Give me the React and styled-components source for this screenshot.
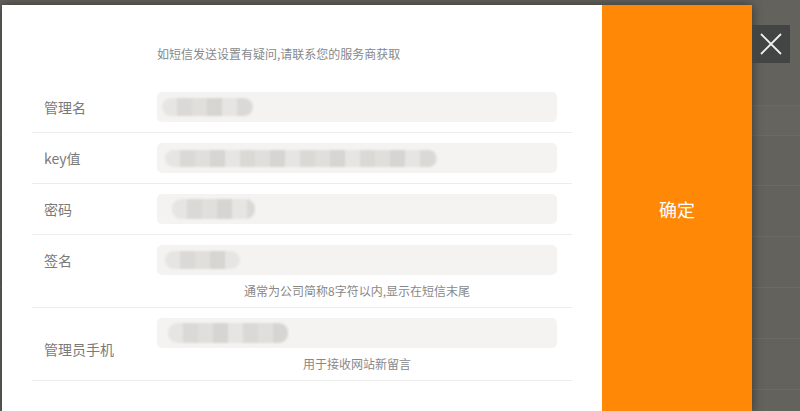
import React from "react";
import styled, { createGlobalStyle } from "styled-components";

const GlobalStyle = createGlobalStyle`
  * { box-sizing: border-box; }
  html, body { margin: 0; padding: 0; }
  body {
    width: 800px;
    height: 411px;
    overflow: hidden;
    background: #63625c;
    font-family: "Noto Sans CJK SC", "Noto Sans", "Liberation Sans", sans-serif;
  }
`;

const Page = styled.div`
  position: relative;
  width: 800px;
  height: 411px;
  overflow: hidden;
  background: #63625c;
`;

const Backdrop = styled.div`
  display: flex;
  flex-direction: column;
  padding-top: 105px;
`;

const BgRow = styled.div`
  height: ${(p) => p.$h}px;
  border-top: 1px solid #6b6a64;
  background: ${(p) => (p.$band ? "#65645e" : "transparent")};
`;

const Modal = styled.div`
  position: absolute;
  left: 2px;
  top: 5px;
  width: 750px;
  height: 408px;
  display: flex;
  box-shadow: 0 0 10px rgba(0, 0, 0, 0.45);
`;

const FormPanel = styled.div`
  width: 600px;
  background: #fff;
  padding: 0 30px;
  display: flex;
  flex-direction: column;
`;

const TopHint = styled.div`
  padding: 40px 0 19px 125px;
  font-size: 12px;
  line-height: 18px;
  color: #888;
`;

const Row = styled.div`
  display: flex;
  align-items: ${(p) => (p.$center ? "center" : "flex-start")};
  padding: 10px 15px 0 0;
  border-bottom: 1px solid #ececec;
  min-height: 51px;
`;

const Label = styled.div`
  width: 125px;
  flex: none;
  padding-left: 12px;
  font-size: 14px;
  line-height: 30px;
  color: #7a7a7a;
`;

const Field = styled.div`
  width: 400px;
  display: flex;
  flex-direction: column;
  padding-bottom: ${(p) => (p.$hint ? 0 : 10)}px;
`;

const Input = styled.div`
  height: 30px;
  border-radius: 5px;
  background: #f4f3f1;
  display: flex;
  align-items: center;
  padding-left: ${(p) => p.$pad}px;
`;

const Mask = styled.span`
  display: block;
  width: ${(p) => p.$w}px;
  height: ${(p) => p.$h || 16}px;
  border-radius: 9px;
  background: repeating-linear-gradient(
    90deg,
    #e6e5e3 0 15px,
    #dad9d6 15px 30px,
    #e0dfdc 30px 45px,
    #d6d5d2 45px 60px
  );
  filter: blur(0.9px);
`;

const FieldHint = styled.div`
  text-align: center;
  font-size: 12px;
  line-height: 18px;
  color: #888;
  padding: 7px 0 7px;
`;

const ConfirmPanel = styled.button`
  width: 150px;
  border: none;
  margin: 0;
  background: #ff8906;
  color: #fff;
  font-family: inherit;
  font-size: 18px;
  cursor: pointer;
`;

const CloseButton = styled.button`
  position: absolute;
  left: 752px;
  top: 25px;
  width: 38px;
  height: 38px;
  border: none;
  padding: 0;
  background: #434544;
  display: flex;
  align-items: center;
  justify-content: center;
  cursor: pointer;
`;

const fields = [
  { label: "管理名", pad: 5, mask: 91, mh: 18 },
  { label: "key值", pad: 8, mask: 272, mh: 17 },
  { label: "密码", pad: 15, mask: 83, mh: 20 },
  { label: "签名", pad: 8, mask: 75, mh: 18, hint: "通常为公司简称8字符以内,显示在短信末尾" },
  {
    label: "管理员手机",
    pad: 11,
    mask: 120,
    mh: 20,
    hint: "用于接收网站新留言",
    center: true,
  },
];

const bgRows = [30, 50, 51, 51, 51, 51, 40];

export default function App() {
  return (
    <Page>
      <GlobalStyle />
      <Backdrop>
        {bgRows.map((h, i) => (
          <BgRow key={i} $h={h} $band={i === 0} />
        ))}
      </Backdrop>

      <Modal>
        <FormPanel>
          <TopHint>如短信发送设置有疑问,请联系您的服务商获取</TopHint>
          {fields.map((f) => (
            <Row key={f.label} $center={f.center}>
              <Label>{f.label}</Label>
              <Field $hint={!!f.hint}>
                <Input $pad={f.pad}>
                  <Mask $w={f.mask} $h={f.mh} />
                </Input>
                {f.hint && <FieldHint>{f.hint}</FieldHint>}
              </Field>
            </Row>
          ))}
        </FormPanel>
        <ConfirmPanel>确定</ConfirmPanel>
      </Modal>

      <CloseButton aria-label="关闭">
        <svg width="22" height="22" viewBox="0 0 22 22">
          <path
            d="M1 1 L21 21 M21 1 L1 21"
            stroke="#f2f2f2"
            strokeWidth="1.8"
            fill="none"
          />
        </svg>
      </CloseButton>
    </Page>
  );
}
